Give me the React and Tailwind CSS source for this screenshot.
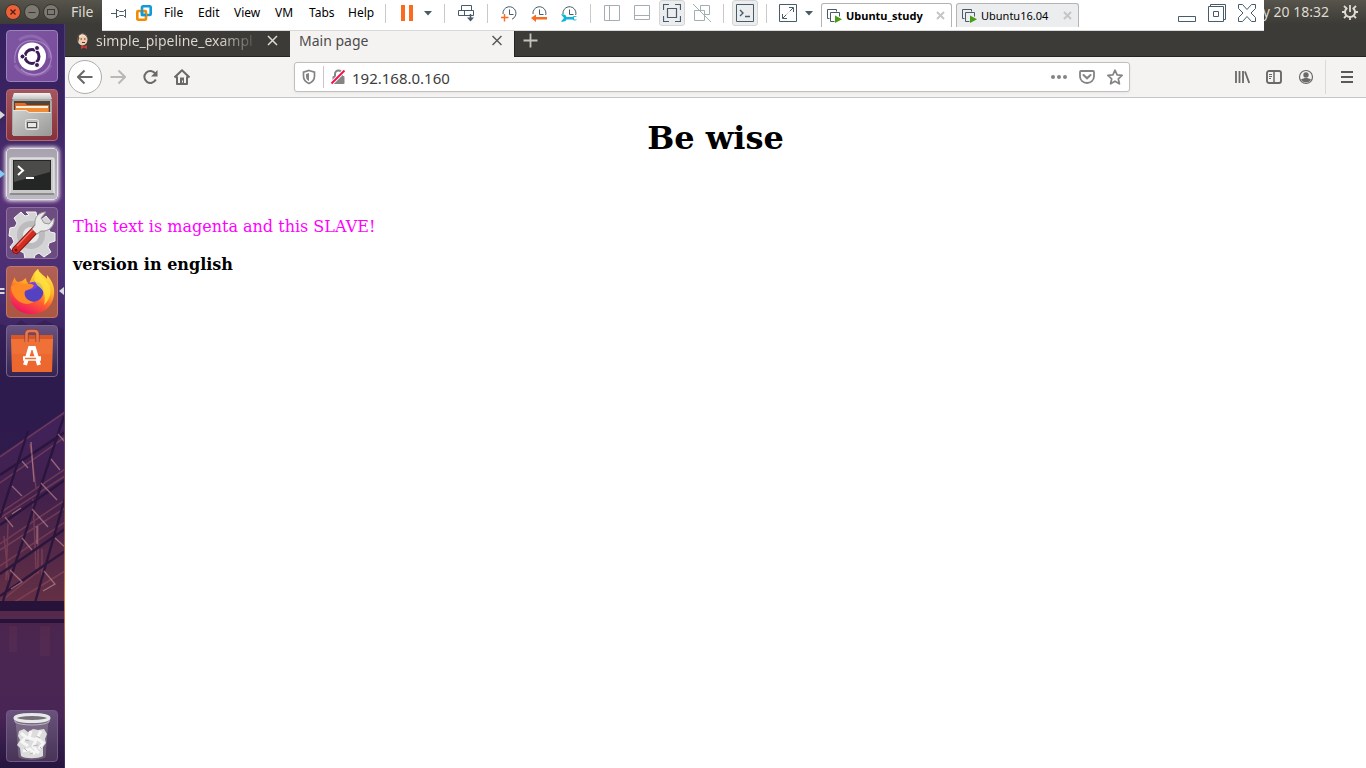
import React from "react";

function Icon({ w = 18, h = 18, children, className = "" }) {
  return (
    <svg width={w} height={h} viewBox={`0 0 ${w} ${h}`} fill="none" className={`shrink-0 ${className}`} aria-hidden="true">
      {children}
    </svg>
  );
}

/* ---------- Top panel ---------- */

function TopPanel() {
  return (
    <header className="flex h-6 items-center bg-linear-to-b from-[#56544b] to-[#3c3b37] pl-[5px] text-[#dfdbd2]">
      <div className="flex gap-[3px]">
        <button aria-label="Close window" className="h-4 w-4">
          <Icon w={16} h={16}>
            <circle cx="8" cy="8" r="7.5" fill="#ee6138" stroke="#38352f" />
            <path d="M5.5 5.5l5 5M10.5 5.5l-5 5" stroke="#512112" strokeWidth="1.4" />
          </Icon>
        </button>
        <button aria-label="Minimize window" className="h-4 w-4">
          <Icon w={16} h={16}>
            <circle cx="8" cy="8" r="7.5" fill="#7c7970" stroke="#38352f" />
            <path d="M4.5 8.5h7" stroke="#3a3834" />
          </Icon>
        </button>
        <button aria-label="Restore window" className="h-4 w-4">
          <Icon w={16} h={16}>
            <circle cx="8" cy="8" r="7.5" fill="#7c7970" stroke="#38352f" />
            <rect x="4.5" y="5.5" width="7" height="5" stroke="#3a3834" />
          </Icon>
        </button>
      </div>
      <button className="ml-3 text-[14px] leading-6">File</button>
      <span className="ml-auto text-[14px] leading-6">y 20 18:32</span>
      <button aria-label="System menu" className="mr-[7px] ml-3">
        <Icon>
          <path d="M6.300 4.800a5 5 0 1 0 5.400 0" stroke="#dfdbd2" strokeWidth="2" />
          <path d="M9 2v7" stroke="#dfdbd2" strokeWidth="1.800" />
          <path d="M3 3l2.200 2.200M15 3l-2.200 2.200M1 9h3M14 9h3M3 15l2.200-2.200M15 15l-2.200-2.200M9 14v3" stroke="#dfdbd2" strokeWidth="1.800" />
        </Icon>
      </button>
    </header>
  );
}

/* ---------- Virtual machine toolbar ---------- */

const SLATE = "#475b68";
const PALE = "#a3adb4";

function Separator({ className }) {
  return <span className={`h-[19px] w-px shrink-0 bg-[#c9c9c9] ${className}`} />;
}

function Snapshot({ children }) {
  return (
    <Icon w={16} h={17}>
      <path d="M2 9a6.500 6.500 0 1 1 9 5.200" stroke={SLATE} />
      <path d="M8.500 4.500v5h4" stroke={SLATE} />
      {children}
    </Icon>
  );
}

function Caret() {
  return (
    <Icon w={8} h={5}>
      <path d="M0 0h8L4 4.500z" fill={SLATE} />
    </Icon>
  );
}

function MachineTab({ label, active }) {
  return (
    <div
      className={
        active
          ? "flex h-6 w-[131px] shrink-0 items-center rounded-t-[3px] border border-b-0 border-[#b4b4b4] bg-white pl-[5px] font-bold"
          : "ml-1 flex h-6 w-[123px] shrink-0 items-center rounded-t-[3px] border border-b-0 border-[#b4b4b4] bg-[#ebedef] pl-[5px]"
      }
    >
      <button className="flex items-center gap-1">
        <Icon w={15} h={14}>
          <path d="M2.500 9.500h-2v-9h9v2" stroke={SLATE} />
          <path d="M7.500 12.500h-4v-9h9v4" stroke={SLATE} />
          <path d="M8 6.500l7 3.700-7 3.700z" fill="#4a9c12" />
        </Icon>
        <span className="text-[11px] leading-4 whitespace-nowrap">{label}</span>
      </button>
      <button aria-label={`Close ${label}`} className="mr-[6px] ml-auto">
        <Icon w={9} h={9}>
          <path d="M1 1l7 7M8 1l-7 7" stroke="#c6c6c6" strokeWidth="2" />
        </Icon>
      </button>
    </div>
  );
}

function MachineToolbar() {
  return (
    <div className="absolute inset-x-[102px] top-0 flex h-[31px] items-center overflow-hidden border-b border-[#d9d9d9] bg-white pr-2 pb-1 pl-[9px] text-black">
      <button aria-label="Pin toolbar">
        <Icon w={16} h={12}>
          <path d="M0 6.500h5M5.500 2v9M5.500 3.500h2l1 1h4l2-2v8l-2-2h-4l-1 1h-2" stroke={SLATE} />
        </Icon>
      </button>
      <button aria-label="Library" className="ml-[9px]">
        <Icon w={16} h={16}>
          <rect x="6" y="1.300" width="8.700" height="8.700" rx="1" stroke="#0f9bd8" strokeWidth="2.600" />
          <rect x="1.300" y="6" width="8.700" height="8.700" rx="1" stroke="#f38b00" strokeWidth="2.600" />
          <path d="M6 5v5h4" stroke="#0f9bd8" strokeWidth="2.600" />
        </Icon>
      </button>
      <nav className="ml-3 flex text-left text-[12px] leading-4">
        <button className="w-[34px] text-left">File</button>
        <button className="w-9 text-left">Edit</button>
        <button className="w-[41px] text-left">View</button>
        <button className="w-[34px] text-left">VM</button>
        <button className="w-[39px] text-left">Tabs</button>
        <button className="w-[37px] text-left">Help</button>
      </nav>
      <Separator className="mr-[15px]" />
      <button aria-label="Suspend">
        <Icon w={12} h={16}>
          <path d="M0 0h4v16H0zM8 0h4v16H8z" fill="#fb6a1f" />
        </Icon>
      </button>
      <button aria-label="Power options" className="ml-[11px]">
        <Caret />
      </button>
      <Separator className="mx-3" />
      <button aria-label="Send Ctrl+Alt+Del" className="mr-3 ml-px">
        <Icon w={17} h={17}>
          <path d="M3.500 5.500v-5h10v5M.5 5.500h15v5H.5zM6.500 5.500v5" stroke={SLATE} />
          <path d="M12.500 9v5" stroke={SLATE} strokeWidth="1.500" />
          <path d="M9 12.500h7l-3.500 4z" fill={SLATE} />
        </Icon>
      </button>
      <Separator className="mr-[13px]" />
      <div className="flex gap-[14px]">
        <button aria-label="Take snapshot">
          <Snapshot>
            <path d="M0 12.500h8M4.500 9v8" stroke="#fff" strokeWidth="3" />
            <path d="M0 12.500h7.500M3.500 9v7.500" stroke="#fb6a1f" strokeWidth="1.400" />
          </Snapshot>
        </button>
        <button aria-label="Revert snapshot">
          <Snapshot>
            <path d="M0 10h16v7H0z" fill="#fff" />
            <path d="M0 13l5-3.500V12h11v2.500H5V17z" fill="#fb6a1f" />
          </Snapshot>
        </button>
        <button aria-label="Manage snapshots">
          <Snapshot>
            <path d="M0 10h16v7H0z" fill="#fff" />
            <path d="M0 9.500c3-.5 5 .5 5.500 2.500h6c1-1 3-1.500 4.500 0h-3v2.500h3c-1.500 1.500-3.500 1-4.500 0h-6C5 16.500 2 17 0 16.500L3 13z" fill="#10b4d8" />
          </Snapshot>
        </button>
      </div>
      <Separator className="mr-[13px] ml-[13px]" />
      <button aria-label="Show sidebar">
        <Icon w={16} h={16}>
          <path d="M.5.5h15v15H.5zM5.500.5v15" stroke={PALE} />
        </Icon>
      </button>
      <button aria-label="Show thumbnails" className="ml-[14px]">
        <Icon w={16} h={16}>
          <path d="M.5.5h15v14H.5zM.5 10.500h15" stroke={PALE} />
        </Icon>
      </button>
      <button aria-label="Full screen" className="ml-[9px] flex h-[26px] w-[26px] shrink-0 items-center justify-center rounded-[3px] border border-[#d5d5d5] bg-[#ebedef]">
        <Icon>
          <path d="M.5 6V.5H6M12 .5h5.500V6M17.500 12v5.500H12M6 17.500H.5V12M4.500 4.500h9v9h-9z" stroke={SLATE} strokeWidth="1.200" />
        </Icon>
      </button>
      <button aria-label="Unity mode" className="ml-2">
        <Icon>
          <path d="M7.500 6V1.500h9v9H12M1.500 6.500h10v10h-10z" stroke={PALE} />
          <path d="M0 0l18 18" stroke={PALE} />
        </Icon>
      </button>
      <Separator className="mr-2 ml-3" />
      <button aria-label="Console view" className="flex h-[26px] w-[26px] shrink-0 items-center justify-center rounded-[3px] border border-[#d5d5d5] bg-[#ebedef]">
        <Icon>
          <path d="M.5.5h17v17H.5z" stroke={SLATE} />
          <path d="M4 6l3 3-3 3M9 12.500h5" stroke={SLATE} strokeWidth="1.400" />
        </Icon>
      </button>
      <Separator className="mr-3 ml-2" />
      <button aria-label="Stretch guest">
        <Icon>
          <path d="M.5.5h17v17H.5zM10 3.500h4.500V8M3.500 10v4.500H8M4 14l3-3M11 7l3-3" stroke={SLATE} />
          <path d="M7 11l4-4" stroke={PALE} strokeDasharray="1 1" />
        </Icon>
      </button>
      <button aria-label="Stretch options" className="mr-2 ml-2">
        <Caret />
      </button>
      <div className="flex pt-1">
        <MachineTab label="Ubuntu_study" active />
        <MachineTab label="Ubuntu16.04" />
      </div>
      <div className="ml-auto flex gap-3">
        <button aria-label="Minimize">
          <Icon>
            <path d="M.5 12.500h17v5H.5z" stroke={SLATE} />
          </Icon>
        </button>
        <button aria-label="Restore">
          <Icon>
            <path d="M.5 2.500h15v15H.5zM2.500 2.500v-2h15v15h-2M5.500 7.500h5v5h-5z" stroke={SLATE} />
          </Icon>
        </button>
        <button aria-label="Close">
          <Icon>
            <path d="M.5.5h4L9 5.500 13.500.5h4v4L13 9l4.500 4.500v4h-4L9 12.500 4.500 17.500h-4v-4L5 9 .5 4.500z" stroke={SLATE} />
          </Icon>
        </button>
      </div>
    </div>
  );
}

/* ---------- Launcher ---------- */

function Wallpaper() {
  return (
    <svg className="absolute inset-0 h-full w-full" viewBox="0 0 65 744" fill="none" preserveAspectRatio="xMidYMax slice" aria-hidden="true">
      <defs>
        <linearGradient id="sky" x1="0" y1="0" x2="0" y2="1">
          <stop offset="0" stopColor="#35205f" />
          <stop offset=".12" stopColor="#3b2460" />
          <stop offset=".24" stopColor="#573277" />
          <stop offset=".36" stopColor="#4a2e72" />
          <stop offset=".47" stopColor="#2f1c50" />
          <stop offset=".6" stopColor="#331b4b" />
          <stop offset=".78" stopColor="#4c2348" />
          <stop offset=".83" stopColor="#4a2650" />
          <stop offset=".93" stopColor="#482555" />
          <stop offset="1" stopColor="#25153f" />
        </linearGradient>
        <linearGradient id="glass" x1="0" y1="0" x2="0" y2="1">
          <stop offset="0" stopColor="#40225c" />
          <stop offset=".45" stopColor="#43214c" />
          <stop offset="1" stopColor="#653044" />
        </linearGradient>
        <linearGradient id="edge" x1="0" y1="0" x2="0" y2="1">
          <stop offset="0" stopColor="#4d3590" />
          <stop offset=".45" stopColor="#4d3590" />
          <stop offset=".6" stopColor="#7a4055" />
          <stop offset=".77" stopColor="#e07b39" />
          <stop offset=".85" stopColor="#a2544b" />
          <stop offset="1" stopColor="#3c2c66" />
        </linearGradient>
      </defs>
      <path d="M0 0h65v744H0z" fill="url(#sky)" />
      <path d="M0 300l12 4 9-8 10 7 14-7 20 10v80L0 430z" fill="#2b1a4b" opacity=".5" />
      <path d="M0 431L65 387V582H0z" fill="url(#glass)" />
      <g stroke="#8b4a5b" strokeWidth="1.500" opacity=".6">
        <path d="M0 433l65-45M0 459l65-46M0 489l65-44M0 494l65-42M0 520l65-44M0 526l65-42M0 542l65-44M0 578l65-52M8 582l57-35" />
        <path d="M30 420l6 44M33 475l3 70M4 512l5 48M8 500l-2 56M42 525v32M38 500v50" />
      </g>
      <g stroke="#28143b" strokeWidth="2.400" opacity=".9">
        <path d="M28 407L0 494M64 392L2 580M65 474L34 582M0 451l65-43M0 501l65-45M0 550l65-45M0 572l65-45" />
      </g>
      <g stroke="#c18a91" strokeWidth="1.300" opacity=".65">
        <path d="M22 437l6 7M31 418l3 40M51 435l9 11M12 462l10 10M41 459l16 17M32 485l16 18M22 514l10 12M37 502v18M10 546l12 12-11 7M44 547l11 13-12 7M58 410l7 8M5 493l8 10M12 490l9-6M55 514l10 9" />
      </g>
      <path d="M0 577h65v10H0zM0 595h65v4H0z" fill="#27123a" />
      <path d="M0 587h65v8H0z" fill="#54294c" />
      <path d="M9 602h8v26H9zM40 602h10v30H40z" fill="#84445a" opacity=".15" />
      <path d="M64 0h1v744h-1z" fill="url(#edge)" />
    </svg>
  );
}

function Tile({ label, className, children, marker }) {
  return (
    <li className="relative flex justify-center">
      {marker}
      <button
        aria-label={label}
        className={`flex h-[52px] w-[52px] items-center justify-center rounded-[4px] border ${className}`}
      >
        {children}
      </button>
    </li>
  );
}

function Marker({ color }) {
  return (
    <svg className="absolute top-[21px] left-0" width="5" height="10" viewBox="0 0 5 10" aria-hidden="true">
      <path d="M0 1l5 4-5 4z" fill={color} />
    </svg>
  );
}

function Launcher() {
  return (
    <aside className="relative flex w-[65px] shrink-0 flex-col justify-between bg-[#35205f] py-[6px] pr-px">
      <Wallpaper />
      <ul className="flex flex-col gap-[7px]">
        <Tile label="Search your computer" className="border-[#9c82bd] bg-linear-to-br from-[#7c56a0] to-[#7a4b9c]">
          <Icon w={50} h={50}>
            <path d="M8 32C6 16 16 8 29 10c12 2 18 13 14 23-5 12-20 14-29 5" stroke="#c0a5d6" strokeWidth="1.200" opacity=".6" />
            <path d="M12 9C28-1 43 10 43 27M44 34C36 49 14 46 8 34" stroke="#d1bce2" strokeWidth="3" opacity=".22" />
            <circle cx="25" cy="25.500" r="14" fill="#fff" />
            <circle cx="25" cy="25.500" r="7" stroke="#3c1b59" strokeWidth="3" />
            <path d="M25 25.500h-8M25 25.500l5-8M25 25.500l5 8" stroke="#fff" strokeWidth="1" />
            <g fill="#3c1b59" stroke="#fff">
              <circle cx="15.500" cy="25.500" r="2.500" />
              <circle cx="30" cy="17" r="2.500" />
              <circle cx="30" cy="34" r="2.500" />
            </g>
          </Icon>
        </Tile>
        <Tile label="Files" className="border-[#b06c70] bg-linear-to-b from-[#a5555e] to-[#87323b]" marker={<Marker color="#d8d8d8" />}>
          <Icon w={50} h={50}>
            <defs>
              <linearGradient id="cabinetTop" x1="0" y1="0" x2="0" y2="1">
                <stop offset="0" stopColor="#f4f4f3" />
                <stop offset="1" stopColor="#c4c4c2" />
              </linearGradient>
              <linearGradient id="cabinetFront" x1="0" y1="0" x2="1" y2="1">
                <stop offset="0" stopColor="#cfcfcd" />
                <stop offset="1" stopColor="#989896" />
              </linearGradient>
            </defs>
            <path d="M7 3h36l2 9v33H5V12z" fill="#a9a9a7" />
            <path d="M7 3h36l2 6H5z" fill="url(#cabinetTop)" />
            <path d="M7 11h36v15H7z" fill="#4c4540" />
            <path d="M8 13h10l2 2h22v9H8z" fill="#e66c25" />
            <path d="M9 16h32v6H9z" fill="#fff0de" />
            <path d="M9 18h32v4H9z" fill="#ef8b35" />
            <path d="M6 20h13l3 2h22v24H6z" fill="url(#cabinetFront)" />
            <path d="M6 20.500h13l3 2h22" stroke="#e6e6e4" />
            <rect x="18.500" y="29.500" width="13" height="10" rx="2" fill="#bdbdbb" stroke="#e8e8e8" />
            <rect x="20.500" y="32.500" width="9" height="5" fill="#e7e7e7" stroke="#555" />
          </Icon>
        </Tile>
        <Tile
          label="Terminal"
          className="border-[#e5e1e8] bg-linear-to-b from-[#a7a2ad] to-[#bdb9c2] shadow-[0_0_4px_1px_#ffffff]"
          marker={<Marker color="#7fcdf0" />}
        >
          <Icon w={50} h={50}>
            <rect x="3" y="9" width="44" height="36" rx="1" fill="#c8c8c8" stroke="#f4f4f4" />
            <path d="M3 44h44v2H3z" fill="#8d8d8d" />
            <path d="M6 11h38v30H6z" fill="#242525" />
            <path d="M7 12h36v11L7 33z" fill="#4b4c4a" />
            <path d="M11 17l5 4.500-5 4.500M19 29h8" stroke="#fff" strokeWidth="2" />
          </Icon>
        </Tile>
        <Tile label="System settings" className="border-[#8c719e] bg-[#735483]/80">
          <Icon w={50} h={50}>
            <path
              d="M19 4h10l1 6 4 2 5-4 6 7-4 5 2 4 5 1v8l-6 2-1 4 3 5-7 5-5-4-4 2-1 4H18l-1-6-4-2-5 3-5-7 4-5-2-5-3-1 1-8 5-1 2-4-3-5 7-6 4 4 4-1z"
              fill="#d4d4d6"
              stroke="#f5f5f5"
            />
            <circle cx="24" cy="27" r="14" fill="#bcbcbf" />
            <circle cx="24" cy="27" r="8" fill="#e9e9ea" />
            <path d="M9 42L31 19" stroke="#7c1510" strokeWidth="8" strokeLinecap="round" />
            <path d="M9 42L30 20" stroke="#d82b20" strokeWidth="6" strokeLinecap="round" />
            <path d="M10 38L28 19" stroke="#ed7267" strokeWidth="1.500" />
            <path d="M28 17c-1-8 4-13 11-13l-5 6 3 5 5 1 5-6c1 8-5 14-13 13l-4 3-5-5z" fill="#eaeaea" stroke="#999" />
            <circle cx="9" cy="42" r="1.500" fill="#6d130f" />
          </Icon>
        </Tile>
        <Tile
          label="Firefox"
          className="border-[#c27868] bg-linear-to-b from-[#b06055] to-[#aa5742]"
          marker={
            <>
              <svg className="absolute top-[20px] left-0" width="5" height="10" viewBox="0 0 5 10" aria-hidden="true">
                <path d="M0 2h4l1 1-1 1H0zM0 6h4l1 1-1 1H0z" fill="#d8d8d8" />
              </svg>
              <svg className="absolute top-[20px] right-0" width="5" height="10" viewBox="0 0 5 10" aria-hidden="true">
                <path d="M5 1L0 5l5 4z" fill="#d8d8d8" />
              </svg>
            </>
          }
        >
          <Icon w={50} h={50}>
            <defs>
              <linearGradient id="fox" x1=".8" y1="0" x2=".3" y2="1">
                <stop offset="0" stopColor="#fff04e" />
                <stop offset=".4" stopColor="#ffac26" />
                <stop offset=".65" stopColor="#ff5d31" />
                <stop offset="1" stopColor="#ee0f65" />
              </linearGradient>
            </defs>
            <path
              d="M8 10c0 3 1 4 3 5l4-1 4-3c0 3 1 5 4 6l-3 4C25 10 26 6 31 2c1 4 6 6 9 10V8c6 7 8 13 7 20-1 11-10 19-22 19C12 47 3 39 3 27c0-7 2-12 5-17z"
              fill="url(#fox)"
            />
            <circle cx="26" cy="25" r="10" fill="#7543db" />
            <path d="M17 27c3-6 10-3 13-7 2-3-1-5-4-5 8-2 12 6 10 12-2 7-10 10-16 5z" fill="#5542c0" />
            <path d="M4 20c3-3 8-4 12-3 4 0 7-1 11 1-1 4-5 4-9 6-2 6 3 10 9 11-11 6-22-3-23-15z" fill="#ff8a26" />
            <path d="M31 2c1 7 9 10 12 18 2 8-2 14-6 18 2-10 0-15-6-19-4-4-5-11 0-17z" fill="#ffe33c" opacity=".8" />
          </Icon>
        </Tile>
        <Tile label="Software" className="border-[#79648f] bg-linear-to-b from-[#68537f] to-[#352451]">
          <Icon w={50} h={50}>
            <path d="M4 9h42v5l-1 32H5L4 14z" fill="#ef7137" />
            <path d="M4 9h42v4H4z" fill="#d95727" />
            <path d="M5 28h40v18H5z" fill="#ec682f" />
            <path d="M19.500 16V8q0-3 3-3h5q3 0 3 3v8" stroke="#8d3c2b" strokeWidth="4" />
            <path d="M19.500 16V8q0-3 3-3h5q3 0 3 3v8" stroke="#e57852" strokeWidth="2.600" />
            <path d="M18 39l5-17h4l5 17" stroke="#fff" strokeWidth="4" />
            <path d="M16 32.500h18" stroke="#fff" strokeWidth="4.500" />
            <path d="M18 32.500h11" stroke="#ef7137" strokeWidth="1.500" />
          </Icon>
        </Tile>
      </ul>
      <ul>
        <Tile label="Trash" className="border-[#705a85] bg-linear-to-b from-[#69527b] to-[#473457]">
          <Icon w={50} h={50}>
            <path d="M9 8h32l-3 38c-4 3-22 3-26 0z" fill="#b9b7bd" opacity=".3" stroke="#bbb" />
            <path d="M12 20l5-2 4 3 5-3 5 1 6-1 3 5-2 5 1 4-3 4v9c-5 3-18 3-22 0l-1-8-3-3 3-5-2-4z" fill="#dcdcdc" />
            <path d="M14 22l5 4-4 5 6 4M24 20l-2 7 7 2-3 6 4 5M34 20l-4 7 6 5-4 6M16 40l7-2 5 5M32 42l-4-3" stroke="#f6f6f6" strokeWidth="3" />
            <path d="M18 29l4 1M26 35l5-1M17 37l3 3M29 25l4 2M23 43l3-1M33 36l2 2" stroke="#b5b5b5" />
            <ellipse cx="25" cy="7" rx="17" ry="3.500" fill="#746e79" stroke="#e8e8e8" strokeWidth="3" />
            <path d="M8 9v2c5 4 29 4 34 0V9" stroke="#b9b9b9" />
          </Icon>
        </Tile>
      </ul>
    </aside>
  );
}

/* ---------- Browser ---------- */

function TabStrip() {
  return (
    <div className="flex h-[33px] items-stretch bg-[#3c3b37]">
      <div className="flex w-[225px] items-center border-b border-[#252422] pt-px pr-3 pl-[10px] text-[#dfdbd2]">
        <Icon w={15} h={16}>
          <path d="M1 15c1-4 3-5 6-5s6 2 7 5z" fill="#303b45" />
          <ellipse cx="7.500" cy="6.500" rx="5" ry="6" fill="#eec9ac" />
          <path d="M3 10C1 5 3 1 7 .5c3 0 5 1.500 5 4C8 2 5 3 4 6z" fill="#5b4c43" />
          <path d="M4 3c2-3 7-2 8 2-3-2-5-2-8 0z" fill="#f7dfc9" />
          <path d="M5.500 6h1.500M9 6h1.500M7 9.500h3" stroke="#50372d" />
          <path d="M6 12l3 1.500 3-1.500v4l-3-1.500L6 16z" fill="#d63b31" />
        </Icon>
        <button className="ml-[6px] w-[165px] overflow-hidden bg-linear-to-r from-[#dfdbd2] from-75% to-[#3c3b37] bg-clip-text text-left text-[14px] leading-5 whitespace-nowrap text-transparent">
          simple_pipeline_exampl
        </button>
        <button aria-label="Close simple_pipeline_exampl" className="ml-auto">
          <Icon w={11} h={11}>
            <path d="M1 1l9 9M10 1l-9 9" stroke="#dfdbd2" strokeWidth="1.500" />
          </Icon>
        </button>
      </div>
      <div className="flex w-56 items-center bg-[#f4f3f2] pr-3 pl-[9px] text-[#4c4c4c]">
        <button className="text-[14px] leading-5">Main page</button>
        <button aria-label="Close Main page" className="ml-auto">
          <Icon w={10} h={11}>
            <path d="M.5 1l9 9M9.500 1l-9 9" stroke="#5a5957" strokeWidth="1.500" />
          </Icon>
        </button>
      </div>
      <div className="flex flex-1 items-center border-b border-l border-[#252422] pl-2">
        <button aria-label="New tab">
          <Icon w={15} h={15}>
            <path d="M.5 7.500h14M7.500.5v14" stroke="#c6c3bb" strokeWidth="1.800" />
          </Icon>
        </button>
      </div>
    </div>
  );
}

function NavButton({ label, children }) {
  return (
    <button aria-label={label} className="flex h-8 w-8 shrink-0 items-center justify-center">
      {children}
    </button>
  );
}

function NavBar() {
  return (
    <div className="flex h-[41px] items-center border-b border-[#c6c5c3] bg-[#f4f3f2] pl-[3px]">
      <button aria-label="Back" className="flex h-[34px] w-[34px] shrink-0 items-center justify-center rounded-full border border-[#adadab] bg-white">
        <Icon w={16} h={16}>
          <path d="M15.500 8H1M7.500 1.500L1 8l6.500 6.500" stroke="#6a6967" strokeWidth="2" />
        </Icon>
      </button>
      <NavButton label="Forward">
        <Icon w={16} h={16}>
          <path d="M.5 8H15M8.500 1.500L15 8l-6.500 6.500" stroke="#b9b8b6" strokeWidth="2" />
        </Icon>
      </NavButton>
      <NavButton label="Reload">
        <Icon w={16} h={16}>
          <path d="M13.300 4.500a6 6 0 1 0 .5 6" stroke="#6a6967" strokeWidth="2" />
          <path d="M15.500 1v6.500H9z" fill="#6a6967" />
        </Icon>
      </NavButton>
      <NavButton label="Home">
        <Icon w={16} h={16}>
          <path d="M.5 8.500L8 1.300l7.500 7.200M3 7.500V15h10V7.500" stroke="#6a6967" strokeWidth="2" strokeLinejoin="round" />
          <path d="M6 8.500h4V15H6z" fill="#6a6967" />
          <path d="M8.500 11.500v2" stroke="#f4f3f2" />
        </Icon>
      </NavButton>
      <div className="mx-24 flex h-[30px] flex-1 items-center rounded-[3px] border border-[#c0bfbd] bg-white px-[6px] shadow-[0_1px_3px_#00000010]">
        <button aria-label="Tracking protection">
          <Icon w={16} h={16}>
            <path d="M8 1.500l5.500 1.700v4c0 4-2.500 6-5.500 7.300C5 13.200 2.500 11.200 2.500 7.200v-4z" stroke="#858483" strokeWidth="1.700" />
            <path d="M8 4L5 5v2.500c0 2 1 3.500 3 4.500z" fill="#858483" />
          </Icon>
        </button>
        <span className="mx-[6px] h-[22px] w-px bg-[#c8c7c5]" />
        <button aria-label="Connection is not secure">
          <Icon w={16} h={16}>
            <path d="M5 7V5a3.500 3.500 0 0 1 7 0v2" stroke="#858483" strokeWidth="2" />
            <rect x="2.500" y="7" width="12" height="8" rx="1" fill="#858483" />
            <path d="M1 15L15 1" stroke="#fff" strokeWidth="4" />
            <path d="M1.500 14.500l13-13" stroke="#f5104a" strokeWidth="2" />
          </Icon>
        </button>
        <input
          aria-label="Address"
          defaultValue="192.168.0.160"
          className="ml-[6px] min-w-0 flex-1 bg-transparent pt-px text-[15px] leading-5 text-[#3d3d3d] outline-none"
        />
        <div className="flex items-center gap-3">
          <button aria-label="Page actions">
            <Icon w={16} h={16}>
              <g fill="#858483">
                <circle cx="2" cy="8" r="2" />
                <circle cx="8" cy="8" r="2" />
                <circle cx="14" cy="8" r="2" />
              </g>
            </Icon>
          </button>
          <button aria-label="Save to Pocket">
            <Icon w={16} h={16}>
              <path d="M2 2h12q1 0 1 1v4.500a7 6.500 0 0 1-14 0V3q0-1 1-1z" stroke="#858483" strokeWidth="1.800" />
              <path d="M4.500 6L8 9.300 11.500 6" stroke="#858483" strokeWidth="2" strokeLinecap="round" />
            </Icon>
          </button>
          <button aria-label="Bookmark this page">
            <Icon w={16} h={16}>
              <path d="M8 1.200l2.100 4.700 5 .5-3.800 3.400 1.100 5L8 12.200l-4.400 2.600 1.100-5L.9 6.400l5-.5z" stroke="#858483" strokeWidth="1.700" strokeLinejoin="round" />
            </Icon>
          </button>
        </div>
      </div>
      <NavButton label="Library">
        <Icon w={16} h={16}>
          <path d="M2 2v12M5.500 2v12M9 2v12M11 2.500L15.200 14" stroke="#6a6967" strokeWidth="1.800" />
        </Icon>
      </NavButton>
      <NavButton label="Sidebars">
        <Icon w={16} h={14}>
          <rect x="1" y="1" width="14" height="12" rx="2" stroke="#6a6967" strokeWidth="1.900" />
          <path d="M8 1v12" stroke="#6a6967" strokeWidth="1.500" />
          <path d="M3 4.500h3M3 6.500h3M3 8.500h2" stroke="#6a6967" />
        </Icon>
      </NavButton>
      <NavButton label="Account">
        <Icon w={16} h={16}>
          <circle cx="8" cy="8" r="6.500" stroke="#6a6967" strokeWidth="1.200" />
          <circle cx="8" cy="6" r="2.700" fill="#6a6967" />
          <path d="M3 10.500c2-1 3-1.500 5-1.500s3 .5 5 1.500c-2 4-8 4-10 0z" fill="#6a6967" />
        </Icon>
      </NavButton>
      <span className="ml-[3px] h-[34px] w-px bg-[#dbdad9]" />
      <button aria-label="Open menu" className="flex h-8 w-10 shrink-0 items-center justify-center pl-[2px]">
        <Icon w={12} h={12}>
          <path d="M0 1h12M0 6h12M0 11h12" stroke="#5a5957" strokeWidth="2" />
        </Icon>
      </button>
    </div>
  );
}

function Page() {
  return (
    <main className="flex-1 bg-white px-2 pt-[21px] font-['DejaVu_Serif',serif] text-[16px] leading-[19px] text-black">
      <h1 className="text-center text-[32px] leading-[38px] font-bold">Be wise</h1>
      <p className="mt-[60px] text-[#ff00ff]">This text is magenta and this SLAVE!</p>
      <p className="mt-[19px] font-bold">version in english</p>
    </main>
  );
}

export default function App() {
  return (
    <div className="relative flex min-h-screen flex-col font-['Noto_Sans',sans-serif]">
      <TopPanel />
      <div className="flex flex-1">
        <Launcher />
        <div className="flex min-w-0 flex-1 flex-col">
          <TabStrip />
          <NavBar />
          <Page />
        </div>
      </div>
      <MachineToolbar />
    </div>
  );
}
